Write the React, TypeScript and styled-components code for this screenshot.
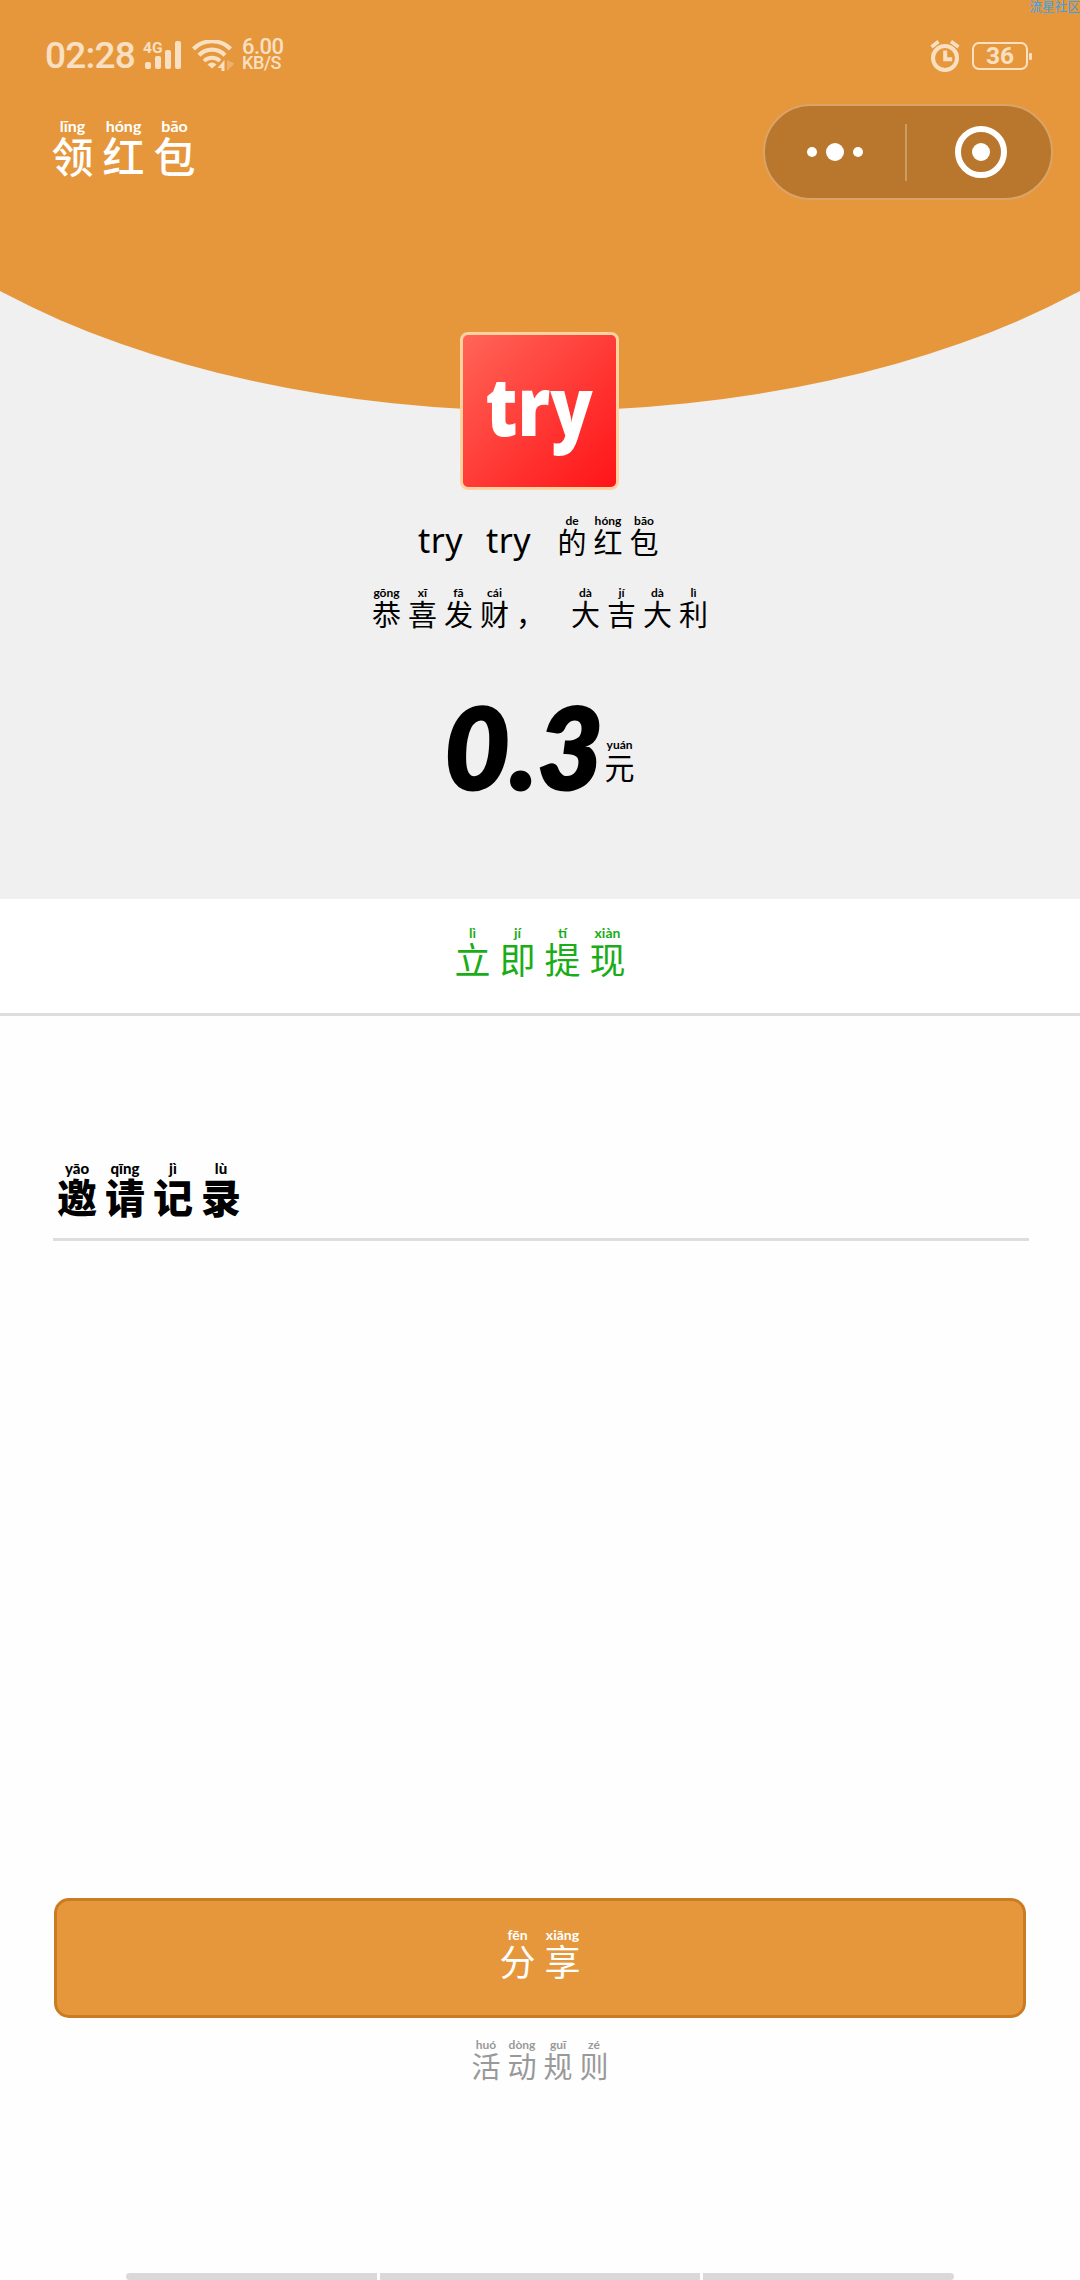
import React from 'react';
import styled, { createGlobalStyle } from 'styled-components';

const orange = '#e6973c';
const statusInk = '#f9e0c2';
const cjk = '"Noto Sans CJK SC", "Noto Sans", sans-serif';

const GlobalStyle = createGlobalStyle`
  * { box-sizing: border-box; }
  body { margin: 0; background: #fefefe; font-family: ${cjk}; }
`;

const Screen = styled.div`
  width: 1080px;
  height: 2280px;
  display: flex;
  flex-direction: column;
  background: #fefefe;
  overflow: hidden;
  position: relative;
`;

const Hero = styled.section`
  height: 899px;
  background: #f0f0f0;
  display: flex;
  flex-direction: column;
  align-items: center;
  overflow: hidden;
`;

const Dome = styled.div`
  flex: none;
  width: 1512px;
  height: 411px;
  background: ${orange};
  border-radius: 0 0 50% 50% / 0 0 400px 400px;
  display: flex;
  flex-direction: column;
  align-items: center;
`;

const StatusBar = styled.div`
  width: 1080px;
  height: 104px;
  padding: 0 48px 0 45px;
  display: flex;
  justify-content: space-between;
  color: ${statusInk};
  font-family: Roboto, sans-serif;
`;

const StatusGroup = styled.div`
  display: flex;
  height: 112px;
  align-items: center;
`;

const Clock = styled.span`
  width: 98px;
  font-size: 37px;
  font-weight: 500;
  letter-spacing: -0.8px;
  line-height: 40px;
`;

const Speed = styled.div`
  display: flex;
  flex-direction: column;
  margin-left: 4px;
  margin-top: -4px;
  font-weight: 500;
`;

const SpeedValue = styled.span`
  font-size: 22px;
  line-height: 17px;
  letter-spacing: -0.5px;
`;

const SpeedUnit = styled.span`
  font-size: 18px;
  line-height: 15px;
  letter-spacing: -0.4px;
`;

const Battery = styled.div`
  width: 56px;
  height: 28px;
  margin-left: 12px;
  border: 2px solid ${statusInk};
  border-radius: 7px;
  display: flex;
  align-items: center;
  justify-content: center;
  font-size: 24.5px;
  font-weight: 700;
  line-height: 24px;
`;

const BatteryTip = styled.span`
  width: 3px;
  height: 7px;
  margin-left: 1px;
  border-radius: 1px;
  background: ${statusInk};
`;

const NavBar = styled.header`
  width: 1080px;
  height: 96px;
  padding: 0 27px 0 47px;
  display: flex;
  justify-content: space-between;
`;

const Title = styled.div`
  padding-top: 14px;
`;

const Capsule = styled.div`
  width: 290px;
  height: 96px;
  border: 2px solid #d9a467;
  border-radius: 48px;
  background: #b8772d;
  display: flex;
  align-items: center;
`;

const CapsuleHalf = styled.button<{ $gap?: number; $shift?: number }>`
  flex: 1;
  height: 92px;
  padding: 0 0 0 ${p => p.$shift ?? 0}px;
  border: 0;
  background: none;
  display: flex;
  align-items: center;
  justify-content: center;
  gap: ${p => p.$gap ?? 0}px;
`;

const Dot = styled.span<{ $size: number }>`
  width: ${p => p.$size}px;
  height: ${p => p.$size}px;
  border-radius: 50%;
  background: #fff;
`;

const Ring = styled.span`
  width: 52px;
  height: 52px;
  border: 6px solid #fff;
  border-radius: 50%;
  display: flex;
  align-items: center;
  justify-content: center;
`;

const Separator = styled.span`
  width: 2px;
  height: 57px;
  background: #cd9c63;
`;

const Avatar = styled.div`
  flex: none;
  width: 159px;
  height: 158px;
  margin: -79px 0 0 -2px;
  border: 3px solid #ffd2a0;
  border-radius: 8px;
  background: linear-gradient(135deg, #ff6558 0%, #ff3a36 52%, #ff1418 100%);
  display: flex;
  justify-content: center;
`;

const Wordmark = styled.span`
  color: #fff;
  font-family: "Noto Sans", sans-serif;
  font-size: 82px;
  font-weight: 900;
  line-height: 138px;
  transform: scaleX(0.85);
`;

const Run = styled.div`
  display: flex;
  align-items: flex-end;
`;

const Cell = styled.span<{ $w: number }>`
  width: ${p => p.$w}px;
  display: flex;
  flex-direction: column;
  align-items: center;
`;

const Pinyin = styled.span<{ $size: number; $heavy?: boolean }>`
  height: ${p => p.$size}px;
  line-height: ${p => p.$size}px;
  font-family: Lato, sans-serif;
  font-size: ${p => p.$size}px;
  font-weight: ${p => (p.$heavy ? 900 : 700)};
  white-space: nowrap;
`;

const Hanzi = styled.span<{ $size: number; $weight: number }>`
  height: ${p => p.$size}px;
  line-height: ${p => p.$size}px;
  font-family: ${cjk};
  font-size: ${p => p.$size}px;
  font-weight: ${p => p.$weight};
`;

type Pair = [string, string];

function Annotated({ text, pitch, size, small, weight = 400 }: {
  text: Pair[]; pitch: number; size: number; small: number; weight?: number;
}) {
  return (
    <Run>
      {text.map(([han, py], i) => (
        <Cell key={i} $w={pitch}>
          <Pinyin $size={small} $heavy={weight > 600}>{py}</Pinyin>
          <Hanzi $size={size} $weight={weight}>{han}</Hanzi>
        </Cell>
      ))}
    </Run>
  );
}

const Line = styled.div<{ $color?: string; $top?: number; $left?: number }>`
  color: ${p => p.$color ?? '#000'};
  margin-top: ${p => p.$top ?? 0}px;
  margin-left: ${p => p.$left ?? 0}px;
  display: flex;
  align-items: flex-end;
`;

const Latin = styled.span`
  width: 68px;
  font-family: "Noto Sans", sans-serif;
  font-size: 34px;
  line-height: 32px;
  letter-spacing: 0.5px;
`;

const Amount = styled.span`
  height: 100px;
  font-family: Lato, sans-serif;
  font-size: 112px;
  font-weight: 900;
  font-style: italic;
  line-height: 95px;
  letter-spacing: 0.8px;
  -webkit-text-stroke: 3px #000;
`;

const Unit = styled.span`
  padding-bottom: 17px;
`;

const Withdraw = styled.button`
  height: 117px;
  padding: 27px 0 0;
  border: 0;
  border-bottom: 3px solid #dedede;
  background: #fff;
  display: flex;
  align-items: flex-start;
  justify-content: center;
`;

const Records = styled.section`
  height: 225px;
  margin: 0 51px 0 53px;
  padding-top: 145px;
  border-bottom: 3px solid #dedede;
`;

const Share = styled.button`
  height: 120px;
  margin: 657px 54px 0;
  padding: 27px 0 0;
  border: 3px solid #ca7c22;
  border-radius: 15px;
  background: ${orange};
  display: flex;
  align-items: flex-start;
  justify-content: center;
`;

const Rules = styled.div`
  display: flex;
  justify-content: center;
`;

const Dock = styled.div`
  height: 7px;
  margin: auto 126px 0;
  display: grid;
  grid-template-columns: 251px 320px 251px;
  gap: 3px;
  border-radius: 4px;
  overflow: hidden;
`;

const DockPart = styled.span`
  background: #d9d9d9;
`;

const Watermark = styled.span`
  position: absolute;
  top: 0;
  right: 0;
  color: #38a3ee;
  font-size: 12.7px;
  line-height: 12px;
`;

const Signal = () => (
  <svg width="40" height="32" viewBox="0 0 40 32" fill={statusInk}>
    <text x="0" y="13" fontFamily="Roboto, sans-serif" fontWeight="700" fontSize="15.5">4G</text>
    <rect x="2" y="22" width="6" height="7" rx="2" />
    <rect x="12" y="16" width="6" height="13" rx="2" />
    <rect x="22" y="10" width="6" height="19" rx="2" />
    <rect x="32" y="1" width="6" height="28" rx="2" />
  </svg>
);

const WifiIcon = styled.svg`
  margin-left: 9px;
`;

const Wifi = () => (
  <WifiIcon width="46" height="32" viewBox="0 0 46 32" fill="none" stroke={statusInk} strokeWidth="4.2">
    <path d="M1.500 9a26 26 0 0 1 37 0" />
    <path d="M7 15.200a18 18 0 0 1 26 0" />
    <path d="M12 21a11.500 11.500 0 0 1 16 0" strokeWidth="3.8" />
    <path d="M15.500 24.500Q20 20.500 24.500 24.500L20 28.500Z" fill={statusInk} stroke="none" />
    <path d="M32.500 20v11h-3v-3h-4Z" fill={statusInk} stroke="none" />
    <path d="M35 20l7.500 3.500-7.500 7.500Z" fill={statusInk} fillOpacity="0.35" stroke="none" />
  </WifiIcon>
);

const Alarm = () => (
  <svg width="30" height="34" viewBox="0 0 30 34" fill="none" stroke={statusInk}>
    <circle cx="15" cy="19" r="12" strokeWidth="4" />
    <path d="M15.200 11.500v8.800h7" strokeWidth="4" />
    <path d="M1.500 8 8.500 2.500M21 2.500 28.500 8" strokeWidth="3.500" />
  </svg>
);

export default function App() {
  return (
    <Screen>
      <GlobalStyle />
      <Hero>
        <Dome>
          <StatusBar>
            <StatusGroup>
              <Clock>02:28</Clock>
              <Signal />
              <Wifi />
              <Speed>
                <SpeedValue>6.00</SpeedValue>
                <SpeedUnit>KB/S</SpeedUnit>
              </Speed>
            </StatusGroup>
            <StatusGroup>
              <Alarm />
              <Battery>36</Battery>
              <BatteryTip />
            </StatusGroup>
          </StatusBar>
          <NavBar>
            <Title>
              <Line $color="#fff">
                <Annotated text={[['领', 'līng'], ['红', 'hóng'], ['包', 'bāo']]} pitch={51} size={42} small={16} weight={500} />
              </Line>
            </Title>
            <Capsule>
              <CapsuleHalf $gap={9}>
                <Dot $size={10} /><Dot $size={18} /><Dot $size={10} />
              </CapsuleHalf>
              <Separator />
              <CapsuleHalf $shift={5}><Ring><Dot $size={18} /></Ring></CapsuleHalf>
            </Capsule>
          </NavBar>
        </Dome>
        <Avatar><Wordmark>try</Wordmark></Avatar>
        <Line $top={25}>
          <Latin>try</Latin>
          <Latin>try</Latin>
          <Annotated text={[['的', 'de'], ['红', 'hóng'], ['包', 'bāo']]} pitch={36} size={29} small={12} />
        </Line>
        <Line $top={31}>
          <Annotated
            text={[['恭', 'gōng'], ['喜', 'xī'], ['发', 'fā'], ['财', 'cái'], ['，', '']]}
            pitch={36} size={29} small={12}
          />
          <Line $left={19}>
            <Annotated text={[['大', 'dà'], ['吉', 'jí'], ['大', 'dà'], ['利', 'lì']]} pitch={36} size={29} small={12} />
          </Line>
        </Line>
        <Line $top={70}>
          <Amount>0.3</Amount>
          <Unit>
            <Annotated text={[['元', 'yuán']]} pitch={32} size={30} small={12} />
          </Unit>
        </Line>
      </Hero>
      <Withdraw>
        <Line $color="#1aad19">
          <Annotated text={[['立', 'lì'], ['即', 'jí'], ['提', 'tí'], ['现', 'xiàn']]} pitch={45} size={36} small={14} />
        </Line>
      </Withdraw>
      <Records>
        <Line>
          <Annotated text={[['邀', 'yāo'], ['请', 'qīng'], ['记', 'jì'], ['录', 'lù']]} pitch={48} size={40} small={15} weight={900} />
        </Line>
      </Records>
      <Share>
        <Line $color="#fff">
          <Annotated text={[['分', 'fēn'], ['享', 'xiāng']]} pitch={45} size={36} small={14} />
        </Line>
      </Share>
      <Rules>
        <Line $color="#999" $top={21}>
          <Annotated text={[['活', 'huó'], ['动', 'dòng'], ['规', 'guī'], ['则', 'zé']]} pitch={36} size={29} small={12} />
        </Line>
      </Rules>
      <Dock><DockPart /><DockPart /><DockPart /></Dock>
      <Watermark>流星社区</Watermark>
    </Screen>
  );
}
